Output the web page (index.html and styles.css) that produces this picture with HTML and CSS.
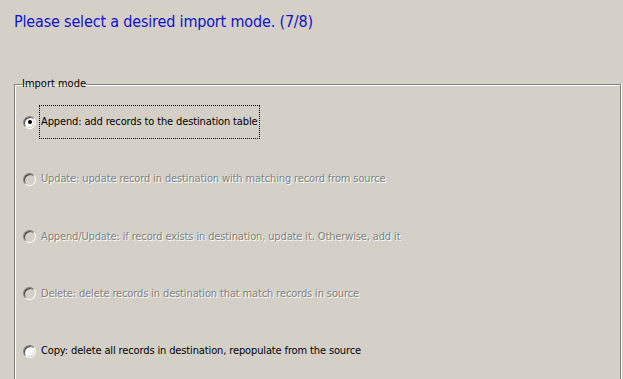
FILE: index.html
```html
<!DOCTYPE html>
<html>
<head><meta charset="utf-8"><link rel="stylesheet" href="styles.css"></head>
<body>
<div class="page">
  <h1 class="title">Please select a desired import mode. (7/8)</h1>
  <fieldset class="group">
    <legend class="legend">Import mode</legend>
    <div class="opt">
      <span class="radio checked"><span class="dot"></span></span>
      <span class="label focus">Append: add records to the destination table</span>
    </div>
    <div class="opt">
      <span class="radio off"></span>
      <span class="label disabled">Update: update record in destination with matching record from source</span>
    </div>
    <div class="opt">
      <span class="radio off"></span>
      <span class="label disabled">Append/Update: if record exists in destination, update it. Otherwise, add it</span>
    </div>
    <div class="opt">
      <span class="radio off"></span>
      <span class="label disabled">Delete: delete records in destination that match records in source</span>
    </div>
    <div class="opt">
      <span class="radio"></span>
      <span class="label">Copy: delete all records in destination, repopulate from the source</span>
    </div>
  </fieldset>
</div>
</body>
</html>
```
FILE: styles.css
```css
html, body { margin: 0; padding: 0; background: #d4d0c8; }
body { width: 623px; height: 379px; overflow: hidden; font-family: "DejaVu Sans Condensed", "DejaVu Sans", sans-serif; }
.page { padding: 11px 0 0 14px; height: 368px; display: flex; flex-direction: column; }
.title { margin: 0; font-size: 16px; font-weight: normal; color: #1010c8; line-height: 22px; letter-spacing: -0.17px; font-family: "DejaVu Sans Condensed", "DejaVu Sans", sans-serif; }
.group {
  margin: 45px 0 0 0; padding: 0 0 0 8px; width: 607px; flex: 1; box-sizing: border-box;
  border: 1px solid #808080; border-bottom: none;
  box-shadow: inset 1px 1px 0 #fff, 1px 0 0 #fff;
  min-width: 0; min-height: 0;
}
.legend { padding: 0; margin-left: -1px; font-size: 11px; color: #000; line-height: 12px; }
.opt { display: flex; align-items: center; height: 34px; margin-top: 23.3px; gap: 3px; font-size: 11px; letter-spacing: -0.13px; }
.opt:first-of-type { margin-top: 15px; }
.radio {
  width: 13px; height: 13px; border-radius: 50%; background: #fff; box-sizing: border-box;
  border: 1px solid; border-color: #808080 #fff #fff #808080;
  box-shadow: inset 1px 1px 0 #404040, inset -1px -1px 0 #d4d0c8;
  display: flex; align-items: center; justify-content: center; flex: none;
}
.radio.off { background: #d4d0c8; }
.dot { width: 4px; height: 4px; border-radius: 50%; background: #000; }
.label { padding: 0 1px; line-height: 32px; color: #000; border: 1px dotted transparent; }
.label.focus { border-color: #000; }
.label.disabled { color: #808080; text-shadow: 1px 1px 0 #fff; }
```
